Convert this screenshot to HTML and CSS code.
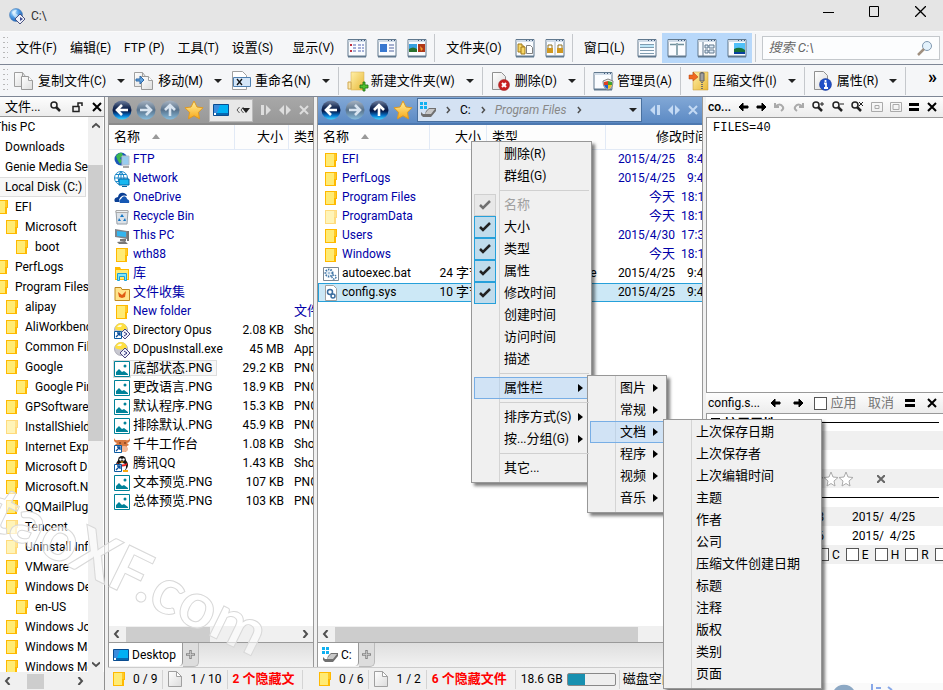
FILE: index.html
```html
<!DOCTYPE html>
<html lang="zh-CN">
<head>
<meta charset="utf-8">
<title>C:\</title>
<link rel="stylesheet" href="styles.css">
</head>
<body>
<svg class="defs" aria-hidden="true">
  <defs>
    <radialGradient id="gGlobe" cx=".35" cy=".3" r=".8"><stop offset="0" stop-color="#d8f0ff"/><stop offset=".4" stop-color="#58a4ea"/><stop offset="1" stop-color="#0d50a8"/></radialGradient>
    <linearGradient id="gBall" x1="0" y1="0" x2="0" y2="1"><stop offset="0" stop-color="#7080a0"/><stop offset=".35" stop-color="#1c3058"/><stop offset=".55" stop-color="#041848"/><stop offset=".8" stop-color="#0878d0"/><stop offset="1" stop-color="#40d8ff"/></linearGradient>
    <linearGradient id="gBallOff" x1="0" y1="0" x2="0" y2="1"><stop offset="0" stop-color="#a8b4c2"/><stop offset=".5" stop-color="#58728c"/><stop offset="1" stop-color="#88bcdc"/></linearGradient>
    <linearGradient id="gStar" x1="0" y1="0" x2="0" y2="1"><stop offset="0" stop-color="#fff2a0"/><stop offset="1" stop-color="#f8a818"/></linearGradient>
    <linearGradient id="gPage" x1="0" y1="0" x2="1" y2="1"><stop offset="0" stop-color="#fff"/><stop offset="1" stop-color="#dcdcdc"/></linearGradient>
    <linearGradient id="gYellow" x1="0" y1="0" x2="1" y2="1"><stop offset="0" stop-color="#fff0a8"/><stop offset="1" stop-color="#e8b838"/></linearGradient>
  </defs>
  <symbol id="folder" viewBox="0 0 12 14"><path d="M0 0h12v8h-1v6H0z" fill="#ffb900"/><path d="M1 1h8v12H1z" fill="#ffeb74"/><path d="M9 1h2v6H9z" fill="#ffc928"/></symbol>
  <symbol id="png" viewBox="0 0 16 16"><path d="M.5.5h15v15H.5z" fill="#fff" stroke="#008299"/><path d="M2 14v-3l3-3 3 3 2-1 4 3v1z" fill="#008299"/><circle cx="11" cy="5" r="1.500" fill="#008299"/></symbol>
  <symbol id="page" viewBox="0 0 14 16"><path d="M.5.5h8l5 5v10H.5z" fill="url(#gPage)" stroke="#a0a0a0"/><path d="M8.500 .5v5h5z" fill="#fff" stroke="#a0a0a0"/></symbol>
  <symbol id="link" viewBox="0 0 8 8"><path d="M.5.5h7v7h-7z" fill="#fff" stroke="#0b5aa0"/><path d="M3 2h3v3M6 2L2 6" fill="none" stroke="#0b4f9c" stroke-width="1.300"/></symbol>
  <symbol id="app" viewBox="0 0 16 16"><circle cx="7" cy="7" r="6.500" fill="url(#gGlobe)" stroke="#4878b0" stroke-width=".5"/><path d="M3 4q3-3 5-2l-2 3 3 2-2 3q-3-1-4-6" fill="#f2fbff" opacity=".6"/><path d="M11 6l5 5-5 5-5-5z" fill="#eef0fa" stroke="#4b5480"/><path d="M11 9l3 2-3 2z" fill="#3f4c90"/></symbol>
  <symbol id="opus" viewBox="0 0 16 16"><circle cx="7" cy="7" r="6.500" fill="#c8c8d0" stroke="#8a8a9a" stroke-width=".6"/><path d="M1 6A6 6 0 0 1 13 6Q7 9 1 6" fill="#ffe040"/><path d="M3 4q2-3 5-2l-1 2z" fill="#fffbd8"/><path d="M11 6l5 5-5 5-5-5z" fill="#eef0fa" stroke="#4b4580"/><path d="M10 9l3 2-3 2" fill="none" stroke="#33337a"/></symbol>
  <symbol id="ftp" viewBox="0 0 16 16"><circle cx="7" cy="7" r="6.500" fill="#1c58b8"/><path d="M2 4q3-4 6-3l1 3-3 2 2 3-2 3Q3 8 2 4" fill="#3db850"/><path d="M8 4h7v9H8z" fill="#98ccf0" stroke="#b4bcc8"/><path d="M9 14h6v2H9z" fill="#a8a8a8"/></symbol>
  <symbol id="net" viewBox="0 0 16 16"><circle cx="7" cy="7" r="6.500" fill="#fff" stroke="#1c88c8"/><path d="M7 .5v13M.5 7h13M2 3.500h10M2 10.500h10M7 .5Q1 7 7 13.500M7 .5Q13 7 7 13.500" fill="none" stroke="#1c88c8"/><path d="M5 8h10v6H5z" fill="#18b8f0" stroke="#0068a8"/><path d="M8 15h5v1H8z" fill="#0068a8"/></symbol>
  <symbol id="cloud" viewBox="0 0 16 16"><path d="M1 12q-2-4 3-5 1-5 6-4 3 1 3 3-6-2-8 4v2z" fill="#0a3f94"/><path d="M6 13q-2-3 1-4 2-4 5-2 1 1 1 2 3 1 2 4z" fill="#1658b4"/></symbol>
  <symbol id="bin" viewBox="0 0 16 16"><path d="M2 2h12l-1 13H3z" fill="#dce2e8" stroke="#98a0a8"/><path d="M2 1.500h12v2H2z" fill="#eef2f4" stroke="#aaa"/><path d="M8 5l2 3H6zM5 9l2 3H4zM11 9l1 3H9z" fill="#1477c4"/></symbol>
  <symbol id="pc" viewBox="0 0 16 16"><path d="M1 1l12 2v8L1 9z" fill="#7d858c"/><path d="M3 3l9 1v5L3 8z" fill="#33b5ee"/><path d="M13 3h2v10h-2zM6 11h6v2H6zM3 14l8-1 3 3H5z" fill="#777"/></symbol>
  <symbol id="lib" viewBox="0 0 16 16"><path d="M1 1h5l1 2h8v11H1z" fill="#ffb900"/><path d="M2 4h12v9H2z" fill="#ffeb74"/><path d="M3.500 7.500h9v7h-2v-4h-5v4h-2z" fill="#80e4f8" stroke="#18a0d8"/></symbol>
  <symbol id="coll" viewBox="0 0 16 16"><path d="M1 2.500h6l1 2h7.500v11H1z" fill="#ffe48c" stroke="#c08a20"/><path d="M4 7l4 3 4-4-1 6-3 1-3-1z" fill="#e05c14"/></symbol>
  <symbol id="cow" viewBox="0 0 16 16"><path d="M0 1q1 3 4 2h8q3 1 4-2 1 4-3 5l2 2-2 1-1 6H6L4 9 1 8l2-2Q-1 5 0 1" fill="#d87840"/><path d="M5 6h2M10 6h2" stroke="#5c2810"/><ellipse cx="10" cy="12" rx="4" ry="3" fill="#f4b898"/></symbol>
  <symbol id="qq" viewBox="0 0 16 16"><ellipse cx="8" cy="9" rx="6" ry="6" fill="#181818"/><ellipse cx="8" cy="4.500" rx="4" ry="4.500" fill="#111"/><ellipse cx="8" cy="11" rx="4" ry="4" fill="#fff"/><path d="M3 7q5 3 10 0v2q-5 3-10 0z" fill="#e82020"/><circle cx="6.500" cy="3.500" r="1.200" fill="#fff"/><circle cx="9.500" cy="3.500" r="1.200" fill="#fff"/><path d="M6 5.500h4l-2 1.500zM3 14h4v2H3zM9 14h5v2H9z" fill="#f8a810"/></symbol>
  <symbol id="bat" viewBox="0 0 16 16"><path d="M.5 1.500h15v13H.5z" fill="#fff" stroke="#7c8894"/><circle cx="6" cy="7" r="3.500" fill="none" stroke="#4478a8" stroke-width="2" stroke-dasharray="1.500 1"/><circle cx="11" cy="11" r="2" fill="none" stroke="#4478a8" stroke-width="1.500" stroke-dasharray="1.500 .8"/><circle cx="6" cy="7" r="1.500" fill="#a8c4dc"/></symbol>
  <symbol id="sys" viewBox="0 0 16 16"><path d="M2.500.5h8l3 3v12h-11z" fill="#fff" stroke="#a0a0a0"/><circle cx="7" cy="7" r="2.500" fill="none" stroke="#3a6ea0" stroke-width="1.500"/><circle cx="10" cy="11" r="2" fill="none" stroke="#3a6ea0" stroke-width="1.500"/></symbol>
  <symbol id="drive" viewBox="0 0 16 16"><path d="M0 0h3v3H0zM4 0h3v3H4zM0 4h3v3H0zM4 4h3v3H4z" fill="#10b0f0"/><path d="M6 9l3-3 7 0v3l-5 6H3l-2-2v-3l2 2 2 0z" fill="#707070"/><path d="M7 9l2-2h6l-4 5H5z" fill="#c8c8c8"/></symbol>
  <symbol id="desk" viewBox="0 0 16 12"><path d="M.5.5h15v11H.5z" fill="#00b0f4" stroke="#0a4c90"/><path d="M1 1h6L4 9H1z" fill="#3c8cdc"/><path d="M1 9h14v2H1z" fill="#0868b0"/><path d="M1 9h2v2H1z" fill="#fff"/></symbol>
  <symbol id="left" viewBox="0 0 20 20"><circle cx="10" cy="10" r="9.500" fill="url(#gBall)"/><path d="M10 5l-5 5 5 5M6 10h10" fill="none" stroke="#fff" stroke-width="2.600"/></symbol>
  <symbol id="up" viewBox="0 0 20 20"><circle cx="10" cy="10" r="9.500" fill="url(#gBall)"/><path d="M5 10l5-5 5 5M10 6v10" fill="none" stroke="#fff" stroke-width="2.600"/></symbol>
  <symbol id="rightoff" viewBox="0 0 20 20"><circle cx="10" cy="10" r="9.500" fill="url(#gBallOff)"/><path d="M10 5l5 5-5 5M14 10H4" fill="none" stroke="#d8e4f0" stroke-width="2.600"/></symbol>
  <symbol id="upoff" viewBox="0 0 20 20"><circle cx="10" cy="10" r="9.500" fill="url(#gBallOff)"/><path d="M5 10l5-5 5 5M10 6v10" fill="none" stroke="#d8e4f0" stroke-width="2.600"/></symbol>
  <symbol id="star" viewBox="0 0 20 20"><path d="M10 1l3 6 6 .8-4.500 4.500 1 6.500-5.500-3-5.500 3 1-6.500L1 7.800 7 7z" fill="url(#gStar)" stroke="#e09820"/></symbol>
  <symbol id="win" viewBox="0 0 20 20"><path d="M1 1.500h18v17H1z" fill="#fafcff" stroke="#60788e"/><path d="M1.500 2h17v2h-17z" fill="#d0dce8"/><path d="M11 2.500h1M14 2.500h1M17 2.500h1" stroke="#405c80"/><path d="M1 18.500h18" stroke="#60788e" stroke-width="2"/></symbol>
  <symbol id="copy" viewBox="0 0 20 20"><path d="M.5 1.500h8l3 4v10H.5z" fill="url(#gPage)" stroke="#a0a0a0"/><path d="M8.500 1.500v4h3" fill="none" stroke="#a0a0a0"/><path d="M7.500 5.500h7l4 4v9h-11z" fill="url(#gPage)" stroke="#999"/><path d="M14.500 5.500v4h4" fill="#fff" stroke="#a0a0a0"/></symbol>
  <symbol id="chev" viewBox="0 0 8 8"><path d="M5.500 0L2 4l3.500 4" fill="none" stroke="#505050" stroke-width="2"/></symbol>
  <symbol id="tri" viewBox="0 0 8 4"><path d="M0 0h8L4 4z" fill="#222"/></symbol>
  <symbol id="x" viewBox="0 0 10 10"><path d="M1 1l8 8M9 1L1 9" fill="none" stroke="currentColor" stroke-width="2"/></symbol>
  <symbol id="arrow" viewBox="0 0 10 10"><path d="M0 5l4-4v8zM4 4h5v2H4z" fill="#000" stroke="#000"/></symbol>
  <symbol id="mag" viewBox="0 0 12 12"><circle cx="4" cy="4" r="3" fill="none" stroke="#222" stroke-width="1.500"/><path d="M6 6l4 4" stroke="#222" stroke-width="2.500"/></symbol>
  <symbol id="tabL" viewBox="0 0 10 12"><path d="M5 1v10L0 6zM7 1h3v10H7z" fill="currentColor"/></symbol>
  <symbol id="tabLR" viewBox="0 0 12 10"><path d="M5 0v10L0 5zM7 0v10l5-5z" fill="currentColor"/></symbol>
  <symbol id="check" viewBox="0 0 12 10"><path d="M1 5l3 3 7-7" fill="none" stroke="currentColor" stroke-width="2.500"/></symbol>
  <symbol id="plus" viewBox="0 0 9 9"><path d="M0 4.500h9M4.500 0v9" stroke="#888" stroke-width="2.500"/><path d="M1 4.500h7M4.500 1v7" stroke="#ccc" stroke-width=".8"/></symbol>
</svg>

<header class="titlebar">
  <svg class="i16"><use href="#app"/></svg>
  <span class="title">C:\</span>
  <div class="wincontrols">
    <button aria-label="最小化"><svg width="11" height="11"><path d="M0 6.500h11" stroke="#000"/></svg></button>
    <button aria-label="最大化"><svg width="11" height="11"><path d="M.5.5h9v10h-9z" fill="none" stroke="#000"/></svg></button>
    <button aria-label="关闭"><svg width="11" height="11"><path d="M0 0l11 11M11 0L0 11" stroke="#000" stroke-width="1.300"/></svg></button>
  </div>
</header>

<nav class="bar menubar">
  <span class="grip"></span>
  <button><span class="zh">文件</span>(F)</button>
  <button><span class="zh">编辑</span>(E)</button>
  <button>FTP (P)</button>
  <button><span class="zh">工具</span>(T)</button>
  <button><span class="zh">设置</span>(S)</button>
  <button class="after"><span class="zh">显示</span>(V)</button>
  <div class="views">
    <button aria-label="详细"><svg class="i20"><use href="#win"/><path d="M3 7h2M3 13h2" stroke="#c03040" stroke-width="2"/><path d="M6 7h3M6 13h3M11 7h3M15 7h2M11 13h3M15 13h2M6 10h3M11 10h3M15 10h2" stroke="#5064b0"/></svg></button>
    <button aria-label="平铺"><svg class="i20"><use href="#win"/><path d="M3 6h7v8H3z" fill="#3878d0"/><path d="M12 7h5M12 10h5M12 13h5" stroke="#5064a0"/></svg></button>
    <button aria-label="缩略图"><svg class="i20"><use href="#win"/><path d="M2 6h8v8H2z" fill="#38a0e0"/><path d="M2 11q4-3 8 0v3H2z" fill="#28702c"/><path d="M11 6h7v8h-7z" fill="#b03818"/><path d="M13 8l3 3-2 2z" fill="#f0a030"/></svg></button>
  </div>
  <i class="sep"></i>
  <button><span class="zh">文件夹</span>(O)</button>
  <div class="views">
    <button aria-label="复制格式"><svg class="i20"><use href="#win"/><path d="M3 6h4v2h2v6H3z" fill="#f8d868" stroke="#a07818"/><path d="M6 9h4v7H6z" fill="#f8d868" stroke="#a07818"/><path d="M11.500 7.500h4l2 2v6h-6z" fill="#fff" stroke="#808080"/></svg></button>
    <button aria-label="锁定"><svg class="i20"><use href="#win"/><path d="M10 4v14" stroke="#a8b4c0"/><path d="M2 10h6v5H2zM12 10h6v5h-6z" fill="#d09820"/><path d="M3 10V7h4v3M13 10V7h4v3" fill="none" stroke="#907020"/></svg></button>
  </div>
  <i class="sep"></i>
  <button><span class="zh">窗口</span>(L)</button>
  <div class="views tight">
    <button aria-label="单列"><svg class="i20"><use href="#win"/><path d="M3 6.500h14M3 9.500h14M3 12.500h14M3 15.500h14" stroke="#809cb0"/><path d="M3 8h14" stroke="#80d0f0"/></svg></button>
    <button class="on" aria-label="双列"><svg class="i20"><use href="#win"/><path d="M3 6.500h6M11 6.500h6M10 5v12" stroke="#70909c" stroke-width="1.500"/></svg></button>
    <button class="on" aria-label="查看器"><svg class="i20"><use href="#win"/><path d="M6 4v14" stroke="#60788e"/><path d="M8 7h3v3H8zM12 7h5v3h-5zM8 12h3v3H8zM12 12h5v3h-5z" fill="#e0ecf8" stroke="#60788e"/></svg></button>
    <button class="on" aria-label="图像"><svg class="i20"><use href="#win"/><path d="M7 5h11v11H7z" fill="#50c0f8"/><path d="M7 11q6-3 11 1v4H7z" fill="#187038"/><path d="M7 14h11v2H7z" fill="#0840a0"/></svg></button>
  </div>
  <i class="sep"></i>
  <div class="search"><input type="text" placeholder="搜索 C:\" aria-label="搜索"><svg class="i16"><circle cx="10" cy="6" r="4.500" fill="#e4f2fc" stroke="#8098b0"/><path d="M7 9l-6 6" stroke="#a09080" stroke-width="2.500"/></svg></div>
</nav>

<div class="bar toolbar">
  <span class="grip"></span>
  <button><svg class="i20"><use href="#copy"/></svg><span><span class="zh">复制文件</span>(C)</span><svg class="dd"><use href="#tri"/></svg></button>
  <button><svg class="i20"><use href="#copy"/><path d="M2 8h4V5l4 4-4 4v-3H2z" fill="#60a0dc" stroke="#2c68a8"/></svg><span><span class="zh">移动</span>(M)</span><svg class="dd"><use href="#tri"/></svg></button>
  <button><svg class="i20"><path d="M1.500.5h10l4 4v14h-14z" fill="#fff" stroke="#a0a0a0"/><path d="M2.500 6.500h17v9h-17z" fill="#d4e6f8" stroke="#5080b0"/><path d="M6 8l5 6M11 8l-5 6" stroke="#111" stroke-width="1.300"/></svg><span><span class="zh">重命名</span>(N)</span><svg class="dd"><use href="#tri"/></svg></button>
  <i class="sep"></i>
  <button><svg class="i20"><path d="M4 1h13v18H4z" fill="url(#gYellow)" stroke="#d0a850" stroke-width=".5"/><path d="M1 11h3v7H1z" fill="#fbe8b0" stroke="#d0a850"/><path d="M13 14h3v-3h2v3h3v3h-3v3h-2v-3h-3z" fill="#50c030" stroke="#207010" stroke-width=".8"/></svg><span><span class="zh">新建文件夹</span>(W)</span><svg class="dd"><use href="#tri"/></svg></button>
  <i class="sep"></i>
  <button><svg class="i20"><path d="M1.500 1.500h9l4 4v13h-13z" fill="url(#gPage)" stroke="#909090"/><circle cx="13" cy="14" r="5.500" fill="#c82020" stroke="#902020" stroke-width=".5"/><path d="M11 12l4 4M15 12l-4 4" stroke="#fff" stroke-width="2"/></svg><span><span class="zh">删除</span>(D)</span><svg class="dd"><use href="#tri"/></svg></button>
  <i class="sep"></i>
  <button><svg class="i20"><use href="#win"/><path d="M15 8l5 2q0 7-5 9-5-2-5-9z" fill="#f0f0f0" stroke="#808080"/><path d="M15 10v4h-4v-3z" fill="#e04020"/><path d="M15 10l4 1v3h-4z" fill="#40a030"/><path d="M15 14v4q-3-1-4-4z" fill="#2060d0"/><path d="M15 14h4q-1 3-4 4z" fill="#f0c020"/></svg><span><span class="zh">管理员</span>(A)</span></button>
  <i class="sep"></i>
  <button><svg class="i20"><path d="M4 1h15v18H4z" fill="url(#gYellow)" stroke="#c09030" stroke-width=".5"/><path d="M13 1v18" stroke="#707070" stroke-width="2" stroke-dasharray="1 1"/><path d="M11 2h4v8h-4z" fill="#a0a0a0" stroke="#606060"/><path d="M0 4h4V1l5 5-5 4V8H0z" fill="#f06820" stroke="#b04010" stroke-width=".5"/></svg><span><span class="zh">压缩文件</span>(I)</span><svg class="dd"><use href="#tri"/></svg></button>
  <i class="sep"></i>
  <button><svg class="i20"><path d="M1.500.5h9l4 4v14h-13z" fill="url(#gPage)" stroke="#909090"/><circle cx="12.500" cy="13.500" r="6" fill="#2050c8" stroke="#102c88" stroke-width=".5"/><path d="M12.500 9v2M11 12.500h2v4M11 17h4" fill="none" stroke="#fff" stroke-width="1.800"/></svg><span><span class="zh">属性</span>(R)</span><svg class="dd"><use href="#tri"/></svg></button>
  <i class="sep"></i>
  <button class="more" aria-label="更多">»</button>
</div>

<main>
  <aside class="tree">
    <div class="phead"><span class="ptitle"><span class="zh">文件</span>...</span><svg class="i12"><use href="#mag"/></svg><svg class="i12"><path d="M2 5.500h6v5H2zM7 5V2h4v3" fill="none" stroke="#222" stroke-width="1.500"/></svg><svg class="i10"><use href="#x"/></svg></div>
    <div class="treebody">
      <div class="treeclip">
      <ul>
        <li class="root">This PC</li>
        <li class="l0">Downloads</li>
        <li class="l0">Genie Media Server</li>
        <li class="l0 cur">Local Disk (C:)</li>
        <li><svg class="fo"><use href="#folder"/></svg>EFI</li>
        <li class="l2"><svg class="fo"><use href="#folder"/></svg>Microsoft</li>
        <li class="l3"><svg class="fo"><use href="#folder"/></svg>boot</li>
        <li><svg class="fo"><use href="#folder"/></svg>PerfLogs</li>
        <li><svg class="fo"><use href="#folder"/></svg>Program Files</li>
        <li class="l2"><svg class="fo"><use href="#folder"/></svg>alipay</li>
        <li class="l2"><svg class="fo"><use href="#folder"/></svg>AliWorkbench</li>
        <li class="l2"><svg class="fo"><use href="#folder"/></svg>Common Files</li>
        <li class="l2"><svg class="fo"><use href="#folder"/></svg>Google</li>
        <li class="l3"><svg class="fo"><use href="#folder"/></svg>Google Pinyin</li>
        <li class="l2"><svg class="fo"><use href="#folder"/></svg>GPSoftware</li>
        <li class="l2"><svg class="fo dim"><use href="#folder"/></svg>InstallShield</li>
        <li class="l2"><svg class="fo"><use href="#folder"/></svg>Internet Explorer</li>
        <li class="l2"><svg class="fo"><use href="#folder"/></svg>Microsoft Data</li>
        <li class="l2"><svg class="fo"><use href="#folder"/></svg>Microsoft.NET</li>
        <li class="l2"><svg class="fo"><use href="#folder"/></svg>QQMailPlugin</li>
        <li class="l2"><svg class="fo dim"><use href="#folder"/></svg>Tencent</li>
        <li class="l2"><svg class="fo dim"><use href="#folder"/></svg>Uninstall Info</li>
        <li class="l2"><svg class="fo"><use href="#folder"/></svg>VMware</li>
        <li class="l2"><svg class="fo"><use href="#folder"/></svg>Windows Defender</li>
        <li class="l3"><svg class="fo"><use href="#folder"/></svg>en-US</li>
        <li class="l2"><svg class="fo"><use href="#folder"/></svg>Windows Journal</li>
        <li class="l2"><svg class="fo"><use href="#folder"/></svg>Windows Mail</li>
        <li class="l2"><svg class="fo"><use href="#folder"/></svg>Windows Media</li>
      </ul>
      </div>
      <div class="vscroll"><svg class="i8 upc"><use href="#chev"/></svg><i></i><svg class="i8 dnc"><use href="#chev"/></svg></div>
    </div>
    <div class="hscroll"><svg class="i8"><use href="#chev"/></svg><i class="t1"></i><svg class="i8 flip"><use href="#chev"/></svg></div>
  </aside>

  <div class="center">
    <div class="panes">
    <section class="pane one">
      <div class="ptool">
        <button aria-label="后退"><svg class="i20"><use href="#left"/></svg></button>
        <button aria-label="前进"><svg class="i20"><use href="#rightoff"/></svg></button>
        <button aria-label="向上"><svg class="i20"><use href="#upoff"/></svg></button>
        <button aria-label="收藏"><svg class="i20"><use href="#star"/></svg></button>
        <button class="loc" aria-label="位置"><svg class="dk"><use href="#desk"/></svg><svg width="14" height="8"><path d="M3.500 1L1 4l2.500 3M7.500 1L5 4l2.500 3" fill="none" stroke="#555"/><path d="M6 2h8l-4 5z" fill="#222"/></svg></button>
        <div class="pbtns"><svg class="flip" width="10" height="12"><use href="#tabL"/></svg><svg width="12" height="10"><use href="#tabLR"/></svg><svg class="i10"><use href="#x"/></svg></div>
      </div>
      <div class="files">
        <table>
          <colgroup><col class="c-name1"><col class="c-size1"><col class="c-type1"></colgroup>
          <thead><tr><th><span class="zh">名称</span><i class="sort"></i></th><th class="r"><span class="zh">大小</span></th><th><span class="zh">类型</span></th></tr></thead>
          <tbody>
            <tr class="dir"><td><svg class="i16"><use href="#ftp"/></svg>FTP</td><td></td><td></td></tr>
            <tr class="dir"><td><svg class="i16"><use href="#net"/></svg>Network</td><td></td><td></td></tr>
            <tr class="dir"><td><svg class="i16"><use href="#cloud"/></svg>OneDrive</td><td></td><td></td></tr>
            <tr class="dir"><td><svg class="i16"><use href="#bin"/></svg>Recycle Bin</td><td></td><td></td></tr>
            <tr class="dir"><td><svg class="i16"><use href="#pc"/></svg>This PC</td><td></td><td></td></tr>
            <tr class="dir"><td><svg class="fo"><use href="#folder"/></svg>wth88</td><td></td><td></td></tr>
            <tr class="dir"><td><svg class="i16"><use href="#lib"/></svg><span class="zh">库</span></td><td></td><td></td></tr>
            <tr class="dir"><td><svg class="i16"><use href="#coll"/></svg><span class="zh">文件收集</span></td><td></td><td></td></tr>
            <tr class="dir"><td><svg class="fo"><use href="#folder"/></svg>New folder</td><td></td><td><span class="zh">文件夹</span></td></tr>
            <tr><td><svg class="i16"><use href="#opus"/><use href="#link" y="8" width="8" height="8"/></svg>Directory Opus</td><td>2.08 KB</td><td>Shortcut</td></tr>
            <tr><td><svg class="i16"><use href="#opus"/></svg>DOpusInstall.exe</td><td>45 MB</td><td>Application</td></tr>
            <tr><td><span class="focus"><svg class="i16"><use href="#png"/></svg><span class="zh">底部状态</span>.PNG</span></td><td>29.2 KB</td><td>PNG</td></tr>
            <tr><td><svg class="i16"><use href="#png"/></svg><span class="zh">更改语言</span>.PNG</td><td>18.9 KB</td><td>PNG</td></tr>
            <tr><td><svg class="i16"><use href="#png"/></svg><span class="zh">默认程序</span>.PNG</td><td>15.3 KB</td><td>PNG</td></tr>
            <tr><td><svg class="i16"><use href="#png"/></svg><span class="zh">排除默认</span>.PNG</td><td>45.9 KB</td><td>PNG</td></tr>
            <tr><td><svg class="i16"><use href="#cow"/><use href="#link" y="8" width="8" height="8"/></svg><span class="zh">千牛工作台</span></td><td>1.08 KB</td><td>Shortcut</td></tr>
            <tr><td><svg class="i16"><use href="#qq"/><use href="#link" y="8" width="8" height="8"/></svg><span class="zh">腾讯</span>QQ</td><td>1.43 KB</td><td>Shortcut</td></tr>
            <tr><td><svg class="i16"><use href="#png"/></svg><span class="zh">文本预览</span>.PNG</td><td>107 KB</td><td>PNG</td></tr>
            <tr><td><svg class="i16"><use href="#png"/></svg><span class="zh">总体预览</span>.PNG</td><td>103 KB</td><td>PNG</td></tr>
          </tbody>
        </table>
      </div>
      <div class="hscroll"><svg class="i8"><use href="#chev"/></svg><i class="t2"></i><svg class="i8 flip"><use href="#chev"/></svg></div>
      <div class="tabs"><button class="tab"><svg class="dk"><use href="#desk"/></svg>Desktop</button><button class="add" aria-label="新标签"><svg width="9" height="9"><use href="#plus"/></svg></button></div>
    </section>

    <section class="pane two">
      <div class="ptool">
        <button aria-label="后退"><svg class="i20"><use href="#left"/></svg></button>
        <button aria-label="前进"><svg class="i20"><use href="#rightoff"/></svg></button>
        <button aria-label="向上"><svg class="i20"><use href="#up"/></svg></button>
        <button aria-label="收藏"><svg class="i20"><use href="#star"/></svg></button>
        <div class="path"><svg class="i16"><use href="#drive"/></svg><svg class="i8 flip"><use href="#chev"/></svg><a href="#">C:</a><svg class="i8 flip"><use href="#chev"/></svg><a href="#" class="ghost">Program Files</a><svg class="i8 flip faint"><use href="#chev"/></svg><svg class="dd"><use href="#tri"/></svg></div>
        <div class="pbtns"><svg width="10" height="12"><use href="#tabL"/></svg><svg width="12" height="10"><use href="#tabLR"/></svg><svg class="i10"><use href="#x"/></svg></div>
      </div>
      <div class="files">
        <table>
          <colgroup><col class="c-name2"><col class="c-size2"><col class="c-type2"><col class="c-date"><col class="c-time"></colgroup>
          <thead><tr><th><span class="zh">名称</span><i class="sort"></i></th><th class="r"><span class="zh">大小</span></th><th><span class="zh">类型</span></th><th colspan="2" class="mod"><span class="zh">修改时间</span></th></tr></thead>
          <tbody>
            <tr class="dir"><td><svg class="fo"><use href="#folder"/></svg>EFI</td><td></td><td></td><td class="r">2015/4/25</td><td class="tm one-d">8:46</td></tr>
            <tr class="dir"><td><svg class="fo"><use href="#folder"/></svg>PerfLogs</td><td></td><td></td><td class="r">2015/4/25</td><td class="tm one-d">9:43</td></tr>
            <tr class="dir"><td><svg class="fo"><use href="#folder"/></svg>Program Files</td><td></td><td></td><td class="r"><span class="zh">今天</span></td><td class="tm">18:12</td></tr>
            <tr class="dir"><td><svg class="fo dim"><use href="#folder"/></svg>ProgramData</td><td></td><td></td><td class="r"><span class="zh">今天</span></td><td class="tm">18:12</td></tr>
            <tr class="dir"><td><svg class="fo"><use href="#folder"/></svg>Users</td><td></td><td></td><td class="r">2015/4/30</td><td class="tm">17:30</td></tr>
            <tr class="dir"><td><svg class="fo"><use href="#folder"/></svg>Windows</td><td></td><td></td><td class="r"><span class="zh">今天</span></td><td class="tm">18:12</td></tr>
            <tr><td><svg class="i16"><use href="#bat"/></svg>autoexec.bat</td><td>24 <span class="zh">字节</span></td><td>Windows Batch File</td><td class="r">2015/4/25</td><td class="tm one-d">9:43</td></tr>
            <tr class="sel"><td><svg class="i16"><use href="#sys"/></svg>config.sys</td><td>10 <span class="zh">字节</span></td><td>System file</td><td class="r">2015/4/25</td><td class="tm one-d">9:43</td></tr>
          </tbody>
        </table>
      </div>
      <div class="hscroll"><svg class="i8"><use href="#chev"/></svg><i class="t3"></i><svg class="i8 flip"><use href="#chev"/></svg></div>
      <div class="tabs"><button class="tab"><svg class="i16"><use href="#drive"/></svg>C:</button><button class="add" aria-label="新标签"><svg width="9" height="9"><use href="#plus"/></svg></button></div>
    </section>
    </div>
    <footer class="status">
      <div class="st one"><span class="cell"><svg class="fo"><use href="#folder"/></svg>0 / 9</span><span class="cell"><svg class="pg"><use href="#page"/></svg>1 / 10</span><span class="cell red">2 <span class="zh">个隐藏文</span></span></div>
      <div class="st two"><span class="cell"><svg class="fo"><use href="#folder"/></svg>0 / 6</span><span class="cell"><svg class="pg"><use href="#page"/></svg>1 / 2</span><span class="cell red">6 <span class="zh">个隐藏文件</span></span><span class="cell disk">18.6 GB<i class="gauge"></i></span><span class="cell"><span class="zh">磁盘空间</span></span></div>
    </footer>
  </div>

  <aside class="right">
    <div class="phead"><b>co...</b><svg class="i10"><use href="#arrow"/></svg><svg class="i10 flip"><use href="#arrow"/></svg>
      <svg class="i12"><path d="M2 2v4h4M2 6q5-5 8 0 1 2-2 4" fill="none" stroke="#aaa" stroke-width="2"/></svg>
      <svg class="i12 flip"><path d="M2 2v4h4M2 6q5-5 8 0 1 2-2 4" fill="none" stroke="#aaa" stroke-width="2"/></svg>
      <svg class="i12"><use href="#mag"/><path d="M8 3h4M10 1v4" stroke="#222"/></svg><svg class="i12"><use href="#mag"/><path d="M8 3h4" stroke="#222"/></svg><svg class="i12"><use href="#mag"/><path d="M8 1l4 4M12 1L8 5" stroke="#222"/></svg>
      <svg class="i12"><path d="M.5 1.500h11v9H.5zM4 4.500h4v3H4z" fill="none" stroke="#aaa"/></svg><svg class="i12"><path d="M.5 1.500h11v9H.5zM3 3.500h6v5H3z" fill="none" stroke="#aaa"/></svg>
      <svg class="i10"><path d="M0 2.500h10M0 7.500h10" stroke="#000" stroke-width="3"/></svg><svg class="i10"><use href="#x"/></svg></div>
    <textarea class="viewer" aria-label="config.sys" readonly>FILES=40</textarea>
    <div class="phead second"><span>config.s...</span><svg class="i10"><use href="#arrow"/></svg><svg class="i10 flip"><use href="#arrow"/></svg><label class="apply"><input type="checkbox"><span class="zh">应用</span></label><button class="zh cancel">取消</button><svg class="i10"><path d="M0 2.500h10M0 7.500h10" stroke="#000" stroke-width="3"/></svg><svg class="i10"><use href="#x"/></svg></div>
    <div class="meta">
      <h2><i class="box"></i><span>扩展属性</span></h2>
      <div class="mrow g"></div>
      <div class="mrow"></div>
      <div class="mrow g stars"><svg width="54" height="16"><g fill="#fff" stroke="#aaa"><path id="st" d="M9 1l2 5 5 .5-4 3.500 1 5-4-2.500-4 2.500 1-5-4-3.500 5-.5z"/><use href="#st" x="15"/><use href="#st" x="30"/></g></svg><svg class="i8"><path d="M0 0l8 8M8 0L0 8" stroke="#666" stroke-width="2"/></svg></div>
      <h2></h2>
      <div class="mrow g dates"><span>8</span><span>2015/ &nbsp;4/25</span></div>
      <div class="mrow dates"><span>6</span><span>2015/ &nbsp;4/25</span></div>
      <div class="mrow g attrs"><label><input type="checkbox">C</label><label><input type="checkbox">E</label><label><input type="checkbox">H</label><label><input type="checkbox">R</label><label><input type="checkbox">S</label></div>
    </div>
    <div class="strip"><svg width="70" height="7"><path d="M0 7a12 12 0 0 1 20 0z" fill="#8ca8c4"/><path d="M38 1v6M42 5h5M54 4l4 3" stroke="#88a8e8" stroke-width="2"/></svg></div>
  </aside>
</main>

<div class="watermark" aria-hidden="true">taoXF.com</div>

<ul class="menu m1">
  <li><span class="zh">删除</span>(R)</li>
  <li><span class="zh">群组</span>(G)</li>
  <li class="line"></li>
  <li class="off"><i class="ck"><svg><use href="#check"/></svg></i><span class="zh">名称</span></li>
  <li><i class="ck"><svg><use href="#check"/></svg></i><span class="zh">大小</span></li>
  <li><i class="ck"><svg><use href="#check"/></svg></i><span class="zh">类型</span></li>
  <li><i class="ck"><svg><use href="#check"/></svg></i><span class="zh">属性</span></li>
  <li><i class="ck"><svg><use href="#check"/></svg></i><span class="zh">修改时间</span></li>
  <li><span class="zh">创建时间</span></li>
  <li><span class="zh">访问时间</span></li>
  <li><span class="zh">描述</span></li>
  <li class="line"></li>
  <li class="hot sub"><span class="zh">属性栏</span>
    <ul class="menu m2">
      <li class="sub"><span class="zh">图片</span></li>
      <li class="sub"><span class="zh">常规</span></li>
      <li class="hot sub"><span class="zh">文档</span>
        <ul class="menu m3">
          <li><span class="zh">上次保存日期</span></li>
          <li><span class="zh">上次保存者</span></li>
          <li><span class="zh">上次编辑时间</span></li>
          <li><span class="zh">主题</span></li>
          <li><span class="zh">作者</span></li>
          <li><span class="zh">公司</span></li>
          <li><span class="zh">压缩文件创建日期</span></li>
          <li><span class="zh">标题</span></li>
          <li><span class="zh">注释</span></li>
          <li><span class="zh">版权</span></li>
          <li><span class="zh">类别</span></li>
          <li><span class="zh">页面</span></li>
        </ul>
      </li>
      <li class="sub"><span class="zh">程序</span></li>
      <li class="sub"><span class="zh">视频</span></li>
      <li class="sub"><span class="zh">音乐</span></li>
    </ul>
  </li>
  <li class="line"></li>
  <li class="sub"><span class="zh">排序方式</span>(S)</li>
  <li class="sub"><span class="zh">按</span>...<span class="zh">分组</span>(G)</li>
  <li class="line"></li>
  <li><span class="zh">其它</span>...</li>
</ul>
</body>
</html>
```
FILE: styles.css
```css
* { box-sizing: border-box; }
body {
  margin: 0; height: 100vh; overflow: hidden; position: relative;
  display: flex; flex-direction: column;
  font: 12px/16px Roboto, "Noto Sans CJK SC", sans-serif;
  color: #000; background: #f0f0f0;
}
.defs { position: absolute; width: 0; height: 0; }
button { font: inherit; color: inherit; background: none; border: 0; padding: 0; white-space: nowrap; }
ul { list-style: none; margin: 0; padding: 0; }
svg { display: block; flex: none; }
a { color: inherit; text-decoration: none; }
.zh { font-size: 13px; }
.i8 { width: 8px; height: 8px; }
.i10 { width: 10px; height: 10px; }
.i12 { width: 12px; height: 12px; overflow: visible; }
.i16, .dk { width: 16px; height: 16px; }
.dk { height: 12px; }
.i20 { width: 20px; height: 20px; overflow: visible; }
.dd { width: 8px; height: 4px; }
.fo { width: 12px; height: 14px; }
.pg { width: 14px; height: 16px; }
.dim { opacity: .5; }
.flip { transform: scaleX(-1); }

.titlebar { height: 31px; flex: none; background: #e5e5e5; display: flex; align-items: center; padding-left: 9px; gap: 6px; }
.title { color: #333; }
.wincontrols { margin-left: auto; display: flex; align-self: flex-start; }
.wincontrols button { width: 46px; height: 23px; display: flex; align-items: center; justify-content: center; }

.bar { display: flex; align-items: center; flex: none; background: #f5f6f8; border-bottom: 1px solid #7e8695; padding-left: 2px; }
.menubar { height: 34px; border-top: 1px solid #fafafa; gap: 13px; }
.toolbar { height: 32px; gap: 9px; }
.grip { width: 6px; height: 27px; flex: none; background: radial-gradient(circle, #b8b8b8 1px, transparent 1px) 0 0 / 4px 5px; }
.menubar .grip { margin-right: -5px; }
.menubar .after { margin-left: 6px; }
.toolbar .grip { margin-right: -3px; }
.bar .sep { width: 1px; height: 28px; background: #c5c8cc; flex: none; margin: 0 -2px; }
.toolbar .sep { margin: 0 -1px; }
.views { display: flex; gap: 10px; margin: 0 -4px 0 0; }
.views.tight { gap: 0; margin: 0 -8px 0 -6px; }
.views.tight button { width: 30px; height: 30px; padding: 4px; border: 1px solid transparent; }
.views .on { background: #b8d8fa; border-color: #68a8e8; }
.search { flex: 1; min-width: 0; display: flex; align-items: center; height: 24px; border: 1px solid #c4c8cc; background: #fcfdfe; padding: 0 6px; margin: 0 3px 0 -5px; }
.search input { flex: 1; min-width: 0; border: 0; background: none; font: italic 13px/16px Roboto, "Noto Sans CJK SC", sans-serif; padding: 0; outline: 0; }
.search input::placeholder { color: #666; }
.menubar > button, .toolbar > button { flex: none; }
.grip + button { margin-left: 6px; }
.menubar .grip + button { margin-left: 0; }
.menubar .grip { margin-right: -5px; }
.toolbar button { display: flex; align-items: center; gap: 4px; }
.toolbar .grip + button { margin-left: 0; }
.toolbar .dd { margin-left: 7px; }
.toolbar .more { font: bold 18px/18px Roboto, sans-serif; margin: 0 6px 8px auto; }

main { flex: 1; min-height: 0; display: flex; }
.tree { width: 105px; flex: none; border-right: 1px solid #909090; display: flex; flex-direction: column; }
.phead { height: 20px; flex: none; display: flex; align-items: center; background: linear-gradient(#fdfdfd, #ececec); }
.tree .phead { padding: 0 4px 0 5px; gap: 9px; border-bottom: 1px solid #999; }
.ptitle { flex: 1; white-space: nowrap; }
.treebody { flex: 1; min-height: 0; display: flex; background: #fff; }
.treeclip { flex: 1; min-width: 0; overflow: hidden; }
.treeclip ul { margin-left: -10px; }
.tree li { height: 20px; display: flex; align-items: center; gap: 7px; padding-left: 6px; white-space: nowrap; }
.tree li.root { padding-left: 4px; }
.tree li.l0 { padding-left: 15px; }
.tree li.l2 { padding-left: 16px; }
.tree li.l3 { padding-left: 26px; }
.tree li.cur { background: #f7f7f7; border: 1px solid #ddd; padding-left: 14px; margin-right: 2px; }
.vscroll { width: 15px; margin-right: 1px; background: #f0f0f0; display: flex; flex-direction: column; align-items: center; padding: 5px 0 4px; }
.vscroll i { width: 15px; height: 276px; margin: 35px 0 auto; background: #cdcdcd; }
.upc { transform: rotate(90deg); }
.dnc { transform: rotate(-90deg); }
.hscroll { height: 16px; flex: none; display: flex; align-items: center; background: #f0f0f0; padding: 0 4px; }
.hscroll i { height: 15px; background: #cdcdcd; margin-right: auto; }
.tree .hscroll { height: 18px; padding-right: 20px; }
.t1 { width: 17px; margin-left: 15px; }
.t2 { width: 84px; margin-left: 5px; }
.t3 { flex: 1; max-width: 303px; margin-left: 5px; }

.center { flex: 1; min-width: 0; margin-left: 3px; display: flex; flex-direction: column; }
.panes { flex: 1; min-height: 0; display: flex; gap: 3px; }
.pane { display: flex; flex-direction: column; border-left: 1px solid #999; border-right: 1px solid #999; min-width: 0; }
.pane.one { width: 206px; flex: none; }
.pane.two { flex: 1; }
.ptool { height: 28px; flex: none; display: flex; align-items: center; gap: 4px; padding-left: 3px; background: linear-gradient(#a8a8a8, #989898); border-bottom: 2px solid #8a8a8a; color: #ddd; }
.two .ptool { background: linear-gradient(#82a8d6, #5c8ac4); border-color: #4c78b0; color: #c4daf4; }
.loc { display: flex; align-items: center; gap: 7px; width: 44px; height: 23px; background: #e8e8e8; padding: 0 3px; margin-left: 1px; border: 1px solid #bbb; }
.pbtns { display: flex; align-items: center; gap: 8px; margin-left: auto; padding-right: 4px; }
.path { flex: 1; height: 24px; display: flex; align-items: center; gap: 9px; padding: 0 4px 0 2px; background: #d4e2f3; border: 1px solid #49709f; color: #000; margin-right: 4px; white-space: nowrap; }
.path .dd { margin-left: auto; }
.path .ghost { font-style: italic; color: #888; }
.path .i8 { width: 6px; }
.files { flex: 1; min-height: 0; background: #fff; overflow: hidden; }
table { table-layout: fixed; border-collapse: separate; border-spacing: 0; width: 250px; }
.two table { width: 430px; }
.c-name1 { width: 126px; } .c-size1 { width: 54px; } .c-type1 { width: 70px; }
.c-name2 { width: 112px; } .c-size2 { width: 57px; } .c-type2 { width: 119px; } .c-date { width: 70px; } .c-time { width: 72px; }
th { height: 25px; padding: 0 5px; font-weight: normal; text-align: left; background: #fdfdfd; border-right: 1px solid #e2eaf6; border-bottom: 1px solid #e2eaf6; white-space: nowrap; }
th .sort { display: inline-block; border: 4px solid transparent; border-top: 0; border-bottom: 5px solid #999; margin-left: 12px; vertical-align: 2px; }
.r { text-align: right; }
th.mod { padding-left: 50px; }
td { height: 19px; padding: 0 5px; line-height: 17px; white-space: nowrap; overflow: visible; }
td .zh { line-height: 16px; }
td svg { display: inline-block; vertical-align: middle; margin-right: 3px; }
td .fo { margin: 0 5px 0 2px; }
td:nth-child(2) { text-align: right; }
td.r, td.tm { padding-right: 1px; }
td.tm.one-d { padding-left: 11px; }
.dir td { color: #0000a8; }
.sel td { background: #cce8f6; border: solid #26a0da; border-width: 1px 0; }
.sel td:first-child { border-left-width: 1px; padding-left: 4px; }
.focus { background: #f7f7f7; outline: 1px solid #ddd; padding-right: 4px; }
.tabs { height: 25px; flex: none; display: flex; border-top: 1px solid #999; background: linear-gradient(#dedede, #f2f2f2); align-items: stretch; }
.tab { background: #fff; display: flex; align-items: center; gap: 3px; padding: 0 6px 0 4px; border-radius: 0 0 4px 0; border: solid #999; border-width: 0 1px 0 0; margin-bottom: 1px; }
.add { width: 16px; display: flex; align-items: center; justify-content: center; background: #ddd; border: solid #bbb; border-width: 0 1px 1px 0; border-radius: 0 0 5px 0; }
.status { height: 23px; flex: none; display: flex; border-top: 1px solid #ccc; }
.st { display: flex; align-items: center; overflow: hidden; }
.st.one { width: 206px; flex: none; }
.st.two { flex: 1; min-width: 0; }
.cell { display: flex; align-items: center; height: 19px; gap: 8px; padding: 0 5px; border-right: 1px solid #d4d4d4; white-space: nowrap; flex: none; }
.cell.red { padding-right: 8px; }
.red { color: #f00; font-weight: bold; gap: 3px; }
.cell.disk { gap: 4px; padding-right: 3px; }
.cell.disk + .cell { padding-left: 3px; }
.gauge { width: 49px; height: 13px; border: 1px solid #888; border-radius: 2px; background: linear-gradient(90deg, #1890b0 17px, #eee 17px); }

.right { width: 240px; flex: none; padding-left: 3px; display: flex; flex-direction: column; overflow: hidden; }
.right .phead { padding: 0 6px 0 2px; justify-content: space-between; }
.right .phead b { font-weight: 500; }
.viewer { flex: 0 0 276px; resize: none; border: 1px solid #999; border-right: 0; padding: 2px 6px; font: 12px/16px "Liberation Mono", monospace; background: #fff; outline: 0; }
input[type=checkbox] { appearance: none; width: 13px; height: 13px; border: 1px solid #555; background: #fff; margin: 0; flex: none; }
.apply { display: flex; align-items: center; gap: 3px; color: #777; }
.cancel { color: #777; }
.meta { background: #fff; border: solid #999; border-width: 1px 0 0 1px; flex: 1; min-height: 0; overflow: hidden; }
.meta h2 { margin: 0; height: 19px; font: bold 13px/16px "Noto Sans CJK SC", sans-serif; display: flex; align-items: center; gap: 4px; padding: 0 4px; }
.meta h2:first-child { height: 17px; }
.meta h2::after { content: ""; height: 1px; flex: 1; background: #000; }
.box { width: 9px; height: 9px; border: 1px solid #000; }
.mrow { height: 19px; display: flex; align-items: center; justify-content: flex-end; }
.g { background: #f0f0f0; }
.stars { padding-right: 58px; gap: 16px; }
.dates { padding-right: 28px; gap: 28px; }
.attrs { justify-content: flex-start; padding-left: 109px; gap: 6px; }
.attrs label { display: flex; align-items: center; gap: 3px; }
.strip { height: 7px; flex: none; background: #fafafa; padding-left: 128px; }

.watermark { position: absolute; left: -20px; top: 538px; font: bold 64px/64px Lato, sans-serif; color: rgba(255,255,255,.6); -webkit-text-stroke: 1px #d8d8d8; transform: rotate(26deg); pointer-events: none; }

.menu { position: absolute; background: linear-gradient(90deg, transparent 27px, #d4d4d4 27px, #d4d4d4 28px, transparent 28px) #f0f0f0; border: 1px solid #979797; padding: 1px 2px 3px; box-shadow: 3px 3px 3px rgba(0,0,0,.5); }
.menu > li { height: 22px; display: flex; align-items: center; padding-left: 30px; white-space: nowrap; position: relative; }
.menu > li.line { height: 7px; padding: 3px 0 3px 26px; }
.line::after { content: ""; height: 1px; flex: 1; background: #d0d0d0; }
.menu > .hot { background: rgba(170,210,250,.45); box-shadow: inset 0 0 0 1px #78aee5; }
.menu > .sub::before { content: ""; position: absolute; right: 6px; top: 7px; border: 4px solid transparent; border-left: 5px solid #000; border-right: 0; }
.off { color: #a0a0a0; }
.ck { position: absolute; left: 0; top: 0; width: 22px; height: 22px; border: 1px solid #26a0da; background: #c0dcec; display: flex; align-items: center; justify-content: center; color: #222; }
.ck svg { width: 12px; height: 10px; }
.off .ck { background: #e8e8e8; border-color: #d0d0d0; color: #707070; }
.m1 { left: 471px; top: 141px; width: 121px; }
.m2 { left: 113px; top: -2px; width: 80px; }
.m3 { left: 73px; top: -2px; width: 159px; }
```
